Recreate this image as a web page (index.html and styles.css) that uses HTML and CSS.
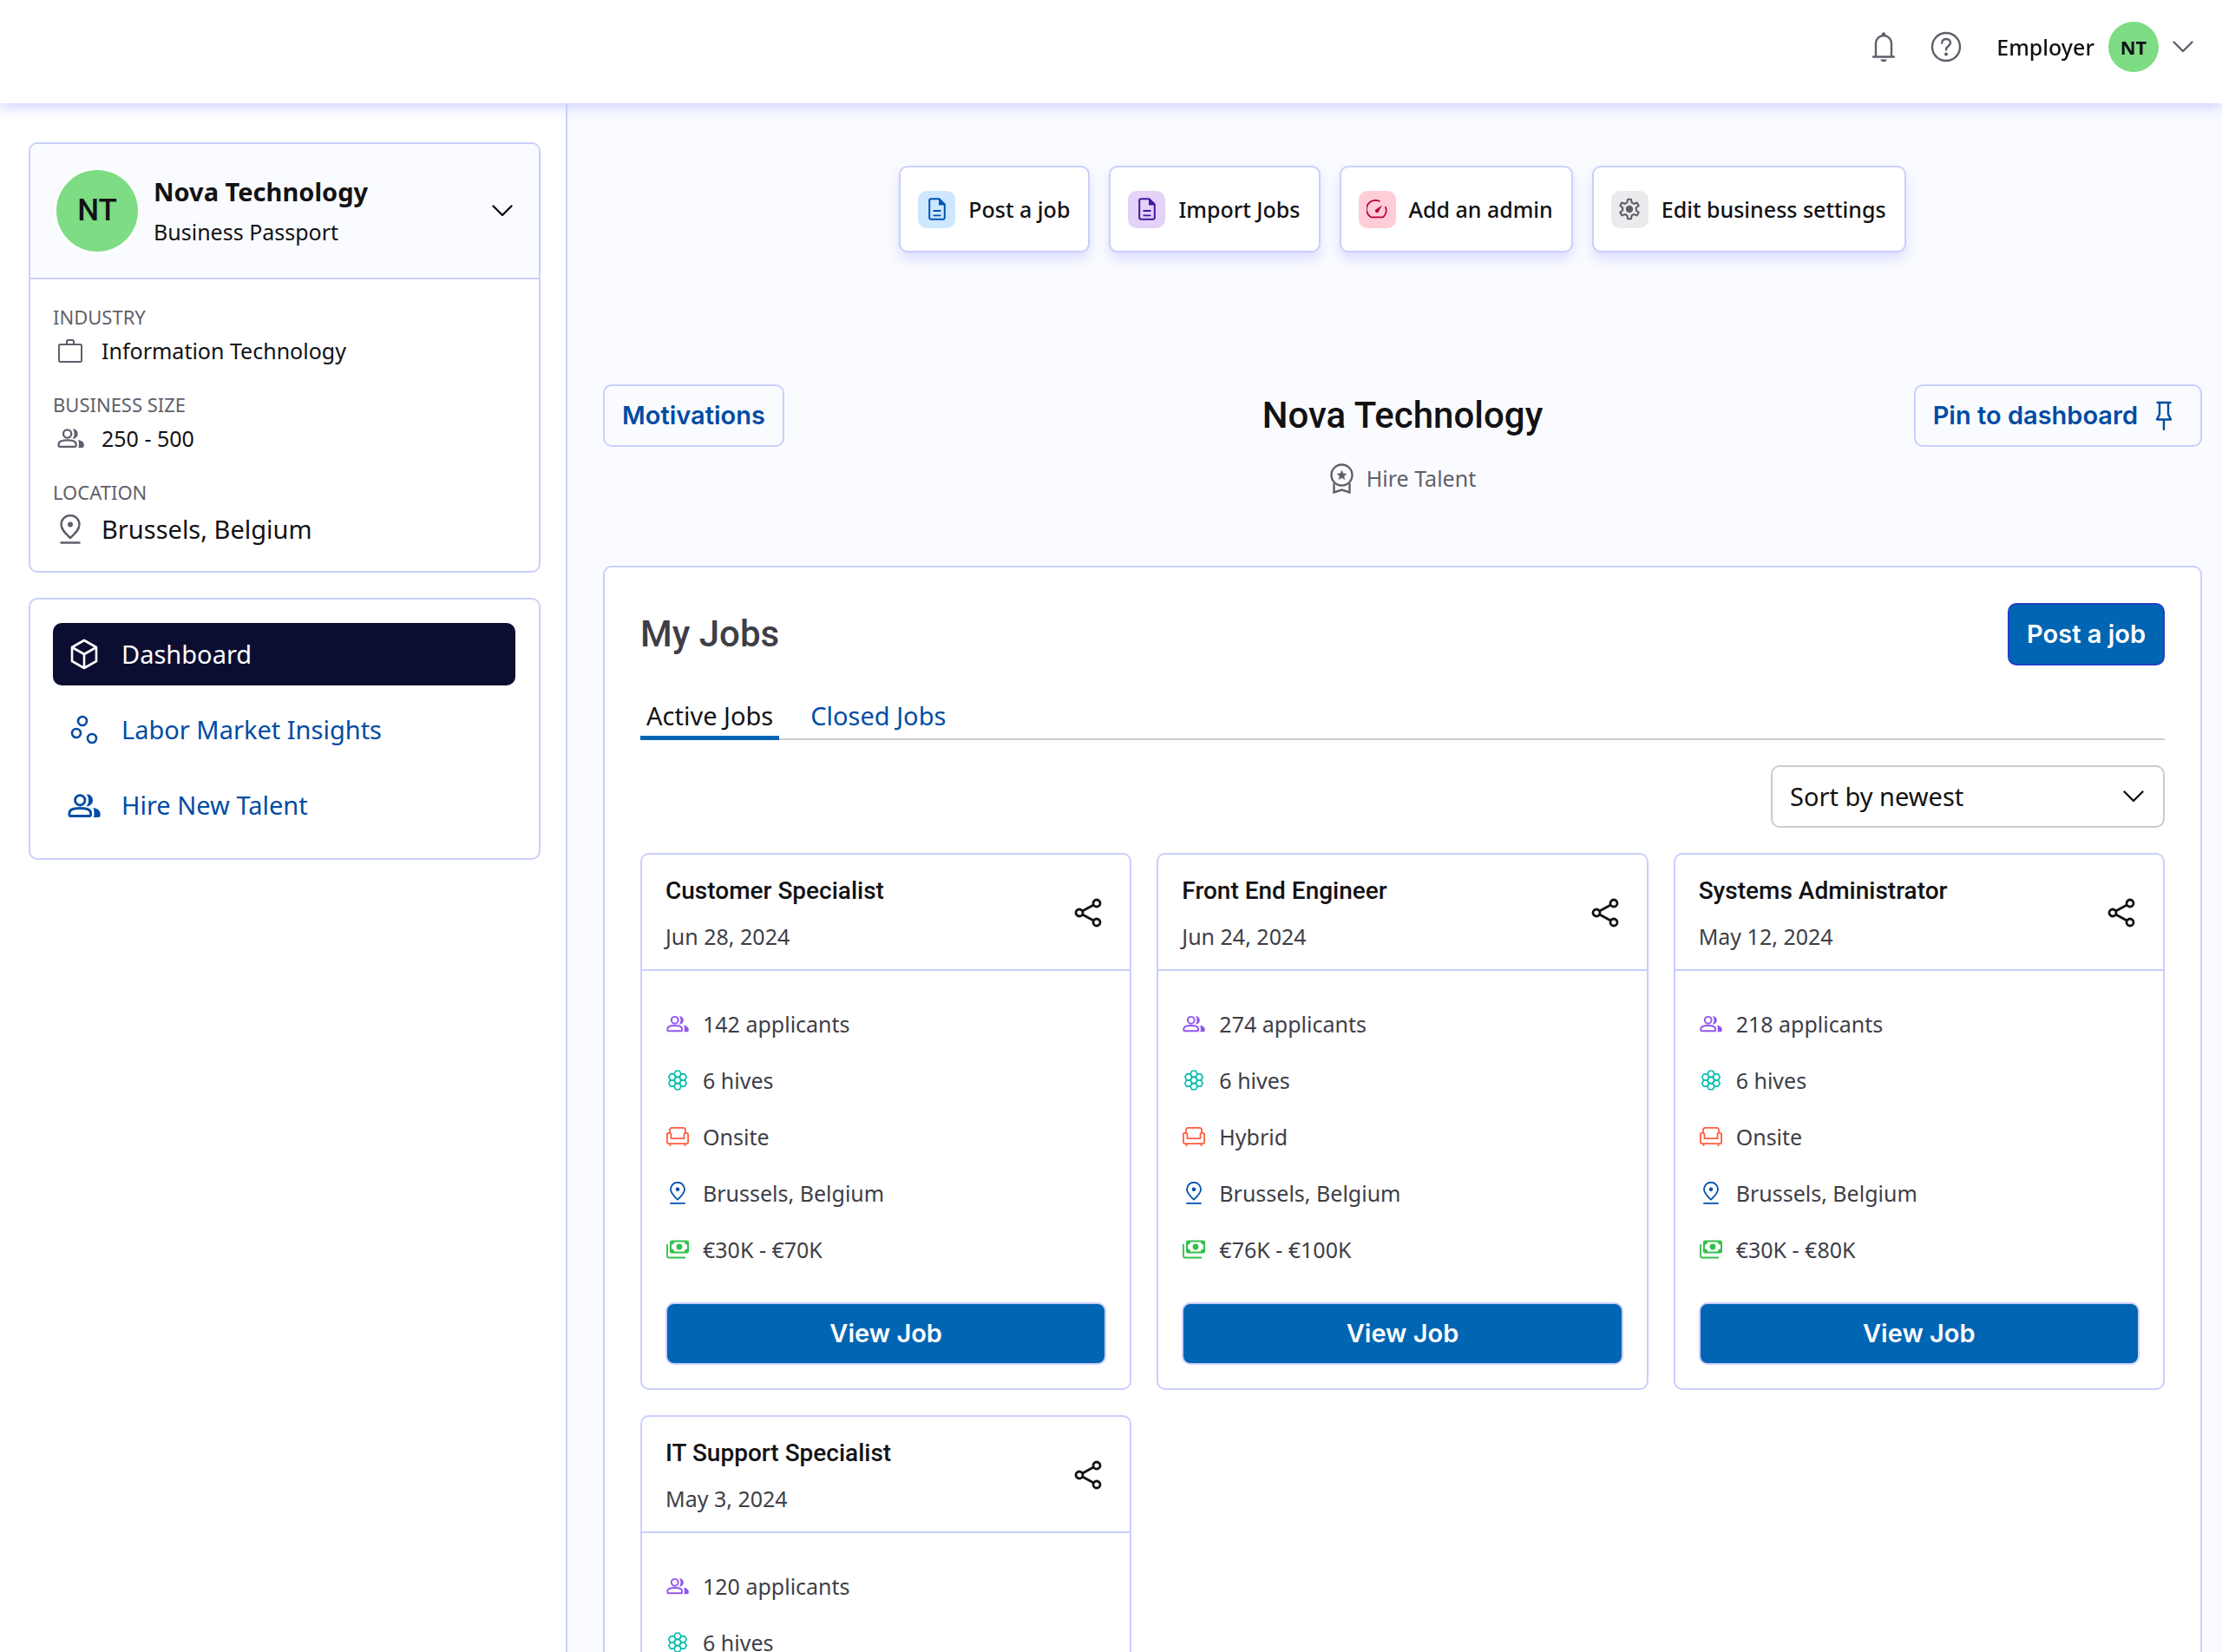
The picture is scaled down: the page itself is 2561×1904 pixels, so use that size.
FILE: index.html
```html
<!DOCTYPE html>
<html lang="en">
<head>
    <meta charset="UTF-8">
    <meta name="viewport" content="width=device-width, initial-scale=1.0">
    <title>Nova Technology - Dashboard</title>
    <link rel="stylesheet" href="styles.css">
</head>
<body>

<!-- Icon sprite -->
<svg class="sprite" aria-hidden="true">
    <symbol id="chevron" viewBox="0 0 24 14">
        <path d="M1.5 1.5L12 12 22.5 1.5" fill="none" stroke="currentColor" stroke-width="2.4" stroke-linecap="round" stroke-linejoin="round"/>
    </symbol>
    <symbol id="people" viewBox="0 0 24 17">
        <circle cx="9" cy="4.6" r="3.6" fill="none" stroke="currentColor" stroke-width="1.8"/>
        <path d="M1.2 14c0-2.6 3.6-3.6 7.8-3.6s7.8 1 7.8 3.6v1.1a1 1 0 0 1-1 1H2.2a1 1 0 0 1-1-1z" fill="none" stroke="currentColor" stroke-width="1.8"/>
        <path d="M13.6.1c2.9.1 4.7 2 4.7 4.5s-1.8 4.4-4.7 4.5c1.1-1.2 1.6-2.8 1.6-4.5S14.7 1.3 13.6.1z" fill="currentColor"/>
        <path d="M18.6 10c3.2.5 5.2 2 5.2 4.6v.9c0 .9-.6 1.5-1.5 1.5h-3.5c.4-.8.5-1.7.5-2.5 0-1.8-.2-3.2-.7-4.5z" fill="currentColor"/>
    </symbol>
    <symbol id="pin-drop" viewBox="0 0 24 34">
        <path d="M12 27C5.5 21 1.5 16.7 1.5 11.5a10.5 10.5 0 0 1 21 0C22.5 16.7 18.500 21 12 27z" fill="none" stroke="currentColor" stroke-width="2.4" stroke-linejoin="round"/>
        <circle cx="12" cy="11.5" r="3" fill="currentColor"/>
        <path d="M1.5 32.5h21" stroke="currentColor" stroke-width="2.4" stroke-linecap="round"/>
    </symbol>
    <symbol id="doc" viewBox="0 0 20 26">
        <path d="M3 1.2h9.5l6.3 6.3V23a1.8 1.8 0 0 1-1.8 1.8H3A1.8 1.8 0 0 1 1.2 23V3A1.8 1.8 0 0 1 3 1.2z" fill="none" stroke="currentColor" stroke-width="2"/>
        <path d="M12 1v7.5h7z" fill="currentColor"/>
        <path d="M5.5 15h9M5.5 20.3h9" stroke="currentColor" stroke-width="1.8"/>
    </symbol>
    <symbol id="gauge" viewBox="0 0 24 22">
        <path d="M15.5 2.3A10.3 10.3 0 0 0 3.8 19.2 2 2 0 0 0 5.5 20.3h13a2 2 0 0 0 1.7-1.1 10.3 10.3 0 0 0 1.5-11" fill="none" stroke="currentColor" stroke-width="1.8"/>
        <path d="M18 6.5L13.6 14.6a2.300 2.300 0 0 1-3.600-2.500z" fill="currentColor"/>
    </symbol>
    <symbol id="gear" viewBox="0 0 24 24">
        <path d="M10.3 1h3.400l.5 3.200 2.300 1.300 3-1.200 1.700 3-2.500 2v2.700l2.500 2-1.700 3-3-1.200-2.300 1.300-.5 3.200h-3.400l-.5-3.200-2.300-1.300-3 1.200-1.700-3 2.500-2V9.300l-2.500-2 1.700-3 3 1.200 2.300-1.300z" transform="translate(0 1.3)" fill="none" stroke="currentColor" stroke-width="1.8" stroke-linejoin="round"/>
        <circle cx="12" cy="12" r="3.6" fill="currentColor"/>
    </symbol>
    <symbol id="share" viewBox="0 0 32 34">
        <g fill="none" stroke="currentColor" stroke-width="2.8">
            <circle cx="26" cy="6" r="4"/>
            <circle cx="6" cy="17" r="4"/>
            <circle cx="26" cy="28" r="4"/>
            <path d="M9.6 15L22.4 8M9.6 19l12.8 7"/>
        </g>
    </symbol>
    <symbol id="hive" viewBox="0 0 24 24">
        <g fill="none" stroke="currentColor" stroke-width="1.5" stroke-linejoin="round">
            <path d="M8.2 12l1.9-3.3h3.8l1.9 3.3-1.9 3.3h-3.8z"/>
            <path d="M8.2 5.4l1.9-3.3h3.8l1.9 3.3-1.9 3.3h-3.8z"/>
            <path d="M8.2 18.6l1.9-3.3h3.8l1.9 3.3-1.9 3.3h-3.8z"/>
            <path d="M2.5 8.7l1.9-3.3h3.8l1.9 3.3L8.2 12H4.4z"/>
            <path d="M2.5 15.3L4.4 12h3.8l1.9 3.3-1.9 3.3H4.4z"/>
            <path d="M13.9 8.7l1.9-3.3h3.8l1.9 3.3-1.9 3.3h-3.8z"/>
            <path d="M13.9 15.3l1.9-3.3h3.8l1.9 3.3-1.9 3.3h-3.8z"/>
        </g>
    </symbol>
    <symbol id="sofa" viewBox="0 0 26 22">
        <g fill="none" stroke="currentColor" stroke-width="1.8">
            <path d="M4 6.5V3.100a2.200 2.200 0 0 1 2.200-2.200h13.600A2.200 2.200 0 0 1 22 3.100v3.400"/>
            <path d="M5.500 13.200V9a2.300 2.300 0 0 0-4.600 0v8a2.200 2.200 0 0 0 2.200 2.200h19.800a2.200 2.200 0 0 0 2.200-2.200V9a2.300 2.300 0 0 0-4.600 0v4.200z"/>
            <path d="M4.500 19v3M21.500 19v3"/>
        </g>
    </symbol>
    <symbol id="cash" viewBox="0 0 26 21">
        <path fill-rule="evenodd" d="M6.500 0h17A2.500 2.500 0 0 1 26 2.500v10a2.500 2.500 0 0 1-2.500 2.500h-17A2.500 2.500 0 0 1 4 12.500v-10A2.500 2.500 0 0 1 6.500 0zM9 2a3 3 0 0 1-3 3v5a3 3 0 0 1 3 3h12a3 3 0 0 1 3-3V5a3 3 0 0 1-3-3z" fill="currentColor"/>
        <circle cx="15" cy="7.500" r="3.400" fill="currentColor"/>
        <path d="M1 4.500V18a2 2 0 0 0 2 2h19" fill="none" stroke="currentColor" stroke-width="1.800"/>
    </symbol>
</svg>

<header class="topbar">
    <button class="icon-btn" aria-label="Notifications">
        <svg width="28" height="36" viewBox="0 0 28 36">
            <path d="M5 29V14a9 9 0 0 1 18 0v15M2 29.5h24" fill="none" stroke="currentColor" stroke-width="2.4" stroke-linecap="round"/>
            <circle cx="14" cy="3.5" r="2.2" fill="currentColor"/>
            <path d="M10.5 32.5h7a3.5 2.8 0 0 1-7 0z" fill="currentColor"/>
        </svg>
    </button>
    <button class="icon-btn" aria-label="Help">
        <svg width="36" height="36" viewBox="0 0 36 36">
            <circle cx="18" cy="18" r="16" fill="none" stroke="currentColor" stroke-width="2.4"/>
            <path d="M13.2 13.5c0-3 2.1-4.5 4.9-4.5s4.9 1.7 4.9 4.3c0 3.7-5 3.8-5 8" fill="none" stroke="currentColor" stroke-width="2.4" stroke-linecap="round"/>
            <circle cx="18" cy="26.5" r="2" fill="currentColor"/>
        </svg>
    </button>
    <button class="account-btn">
        <span>Employer</span>
        <span class="avatar avatar-small">NT</span>
        <svg class="chevron"><use href="#chevron"/></svg>
    </button>
</header>

<div class="layout">
    <!-- Sidebar -->
    <aside class="sidebar">
        <section class="box">
            <div class="profile">
                <span class="avatar avatar-large">NT</span>
                <div class="profile-text">
                    <strong>Nova Technology</strong>
                    <span>Business Passport</span>
                </div>
                <button class="toggle-btn" aria-label="Collapse profile">
                    <svg class="chevron"><use href="#chevron"/></svg>
                </button>
            </div>
            <dl class="facts">
                <div>
                    <dt>INDUSTRY</dt>
                    <dd>
                        <span class="fact-icon">
                            <svg width="30" height="29" viewBox="0 0 30 29">
                                <rect x="2" y="7" width="26" height="20" rx="1.5" fill="none" stroke="currentColor" stroke-width="2"/>
                                <path d="M11 7V3.5A1.5 1.5 0 0 1 12.5 2h5A1.5 1.5 0 0 1 19 3.5V7" fill="none" stroke="currentColor" stroke-width="2"/>
                            </svg>
                        </span>
                        Information Technology
                    </dd>
                </div>
                <div>
                    <dt>BUSINESS SIZE</dt>
                    <dd>
                        <span class="fact-icon"><svg width="31" height="22"><use href="#people"/></svg></span>
                        250 - 500
                    </dd>
                </div>
                <div>
                    <dt>LOCATION</dt>
                    <dd class="fact-large">
                        <span class="fact-icon"><svg width="24" height="34"><use href="#pin-drop"/></svg></span>
                        Brussels, Belgium
                    </dd>
                </div>
            </dl>
        </section>

        <nav class="box side-nav">
            <a href="#" class="active">
                <span class="nav-icon">
                    <svg width="32" height="36" viewBox="0 0 32 36">
                        <path d="M16 2l14 8v16l-14 8-14-8V10zM2 10l14 8 14-8M16 18v16" fill="none" stroke="currentColor" stroke-width="2.6" stroke-linejoin="round"/>
                    </svg>
                </span>
                Dashboard
            </a>
            <a href="#">
                <span class="nav-icon">
                    <svg width="32" height="34" viewBox="0 0 32 34">
                        <g fill="none" stroke="currentColor" stroke-width="2.6">
                            <circle cx="14" cy="7" r="5"/>
                            <circle cx="7" cy="21" r="5"/>
                            <circle cx="25" cy="27" r="5"/>
                        </g>
                    </svg>
                </span>
                Labor Market Insights
            </a>
            <a href="#">
                <span class="nav-icon"><svg width="38" height="27"><use href="#people"/></svg></span>
                Hire New Talent
            </a>
        </nav>
    </aside>

    <!-- Main content -->
    <main class="content">
        <div class="quick-actions">
            <button><span class="tile tile-blue"><svg width="20" height="26"><use href="#doc"/></svg></span>Post a job</button>
            <button><span class="tile tile-purple"><svg width="20" height="26"><use href="#doc"/></svg></span>Import Jobs</button>
            <button><span class="tile tile-red"><svg width="24" height="22"><use href="#gauge"/></svg></span>Add an admin</button>
            <button><span class="tile tile-gray"><svg width="28" height="28"><use href="#gear"/></svg></span>Edit business settings</button>
        </div>

        <div class="page-head">
            <button class="btn btn-outline">Motivations</button>
            <div class="page-title">
                <h1>Nova Technology</h1>
                <p>
                    <svg width="29" height="35" viewBox="0 0 29 35">
                        <circle cx="14.5" cy="13.5" r="12" fill="none" stroke="currentColor" stroke-width="2.4"/>
                        <path d="M14.5 7.5l1.7 4 4.3.4-3.3 2.8 1 4.3-3.7-2.3-3.7 2.3 1-4.3-3.3-2.8 4.3-.4z" fill="currentColor"/>
                        <path d="M5.5 23v10.5l9-3 9 3V23" fill="none" stroke="currentColor" stroke-width="2.4"/>
                    </svg>
                    Hire Talent
                </p>
            </div>
            <button class="btn btn-outline">
                Pin to dashboard
                <svg width="44" height="34" viewBox="0 0 20 34">
                    <path d="M2.5 2h15M5 2v13.5L2 21.5h16L15 15.5V2M10 21.5V33" fill="none" stroke="currentColor" stroke-width="2.4" stroke-linecap="round" stroke-linejoin="round"/>
                </svg>
            </button>
        </div>

        <section class="jobs">
            <div class="jobs-head">
                <h2>My Jobs</h2>
                <button class="btn btn-primary btn-post">Post a job</button>
            </div>

            <div class="tabs" role="tablist">
                <button role="tab" aria-selected="true" class="active">Active Jobs</button>
                <button role="tab" aria-selected="false">Closed Jobs</button>
            </div>

            <div class="sort">
                <select aria-label="Sort jobs">
                    <option>Sort by newest</option>
                    <option>Sort by oldest</option>
                </select>
                <svg class="chevron"><use href="#chevron"/></svg>
            </div>

            <div class="job-grid">
                <article class="job-card">
                    <header>
                        <div>
                            <h3>Customer Specialist</h3>
                            <time datetime="2024-06-28">Jun 28, 2024</time>
                        </div>
                        <button aria-label="Share"><svg width="32" height="34"><use href="#share"/></svg></button>
                    </header>
                    <ul>
                        <li><svg class="purple"><use href="#people"/></svg>142 applicants</li>
                        <li><svg class="teal"><use href="#hive"/></svg>6 hives</li>
                        <li><svg class="orange"><use href="#sofa"/></svg>Onsite</li>
                        <li><svg class="blue"><use href="#pin-drop"/></svg>Brussels, Belgium</li>
                        <li><svg class="green"><use href="#cash"/></svg>€30K - €70K</li>
                    </ul>
                    <button class="btn btn-primary">View Job</button>
                </article>

                <article class="job-card">
                    <header>
                        <div>
                            <h3>Front End Engineer</h3>
                            <time datetime="2024-06-24">Jun 24, 2024</time>
                        </div>
                        <button aria-label="Share"><svg width="32" height="34"><use href="#share"/></svg></button>
                    </header>
                    <ul>
                        <li><svg class="purple"><use href="#people"/></svg>274 applicants</li>
                        <li><svg class="teal"><use href="#hive"/></svg>6 hives</li>
                        <li><svg class="orange"><use href="#sofa"/></svg>Hybrid</li>
                        <li><svg class="blue"><use href="#pin-drop"/></svg>Brussels, Belgium</li>
                        <li><svg class="green"><use href="#cash"/></svg>€76K - €100K</li>
                    </ul>
                    <button class="btn btn-primary">View Job</button>
                </article>

                <article class="job-card">
                    <header>
                        <div>
                            <h3>Systems Administrator</h3>
                            <time datetime="2024-05-12">May 12, 2024</time>
                        </div>
                        <button aria-label="Share"><svg width="32" height="34"><use href="#share"/></svg></button>
                    </header>
                    <ul>
                        <li><svg class="purple"><use href="#people"/></svg>218 applicants</li>
                        <li><svg class="teal"><use href="#hive"/></svg>6 hives</li>
                        <li><svg class="orange"><use href="#sofa"/></svg>Onsite</li>
                        <li><svg class="blue"><use href="#pin-drop"/></svg>Brussels, Belgium</li>
                        <li><svg class="green"><use href="#cash"/></svg>€30K - €80K</li>
                    </ul>
                    <button class="btn btn-primary">View Job</button>
                </article>

                <article class="job-card">
                    <header>
                        <div>
                            <h3>IT Support Specialist</h3>
                            <time datetime="2024-05-03">May 3, 2024</time>
                        </div>
                        <button aria-label="Share"><svg width="32" height="34"><use href="#share"/></svg></button>
                    </header>
                    <ul>
                        <li><svg class="purple"><use href="#people"/></svg>120 applicants</li>
                        <li><svg class="teal"><use href="#hive"/></svg>6 hives</li>
                    </ul>
                </article>
            </div>
        </section>
    </main>
</div>

</body>
</html>
```

FILE: styles.css
```css
:root {
    --text: #121214;
    --text-soft: #3e3e47;
    --text-muted: #5f5f6b;
    --border: #cacffc;
    --border-gray: #cbcbd2;
    --link: #004ca3;
    --primary: #0065b3;
    --page: #fafbff;
    --navy: #0b0e31;
    --heading-font: Roboto, sans-serif;
    --button-font: Inter, sans-serif;
}

* {
    box-sizing: border-box;
}

body {
    margin: 0;
    height: 100vh;
    display: flex;
    flex-direction: column;
    overflow: hidden;
    background-color: #fff;
    color: var(--text);
    font-family: "Noto Sans", sans-serif;
    font-size: 25px;
    line-height: 36px;
}

h1, h2, h3, p, ul, dl, dd {
    margin: 0;
    padding: 0;
}

button {
    font: inherit;
    color: inherit;
    background: none;
    border: none;
    padding: 0;
    cursor: pointer;
}

svg {
    display: block;
    flex-shrink: 0;
}

.sprite {
    position: absolute;
    width: 0;
    height: 0;
}

.chevron {
    width: 24px;
    height: 14px;
}

/* Top bar */
.topbar {
    position: relative;
    z-index: 1;
    flex-shrink: 0;
    height: 119px;
    padding: 0 33px 12px;
    display: flex;
    align-items: center;
    justify-content: flex-end;
    gap: 40px;
    background-color: #fff;
    box-shadow: 0 4px 16px #cacffc;
}

.icon-btn {
    color: var(--text-muted);
}

.account-btn {
    display: flex;
    align-items: center;
    gap: 16px;
    font-weight: 500;
}

.account-btn .chevron {
    color: var(--text-muted);
}

.avatar {
    display: flex;
    align-items: center;
    justify-content: center;
    flex-shrink: 0;
    border-radius: 50%;
    background-color: #7ddc84;
}

.avatar-small {
    width: 58px;
    height: 58px;
    font-size: 22px;
    font-weight: 700;
}

.avatar-large {
    width: 94px;
    height: 94px;
    font-family: var(--heading-font);
    font-size: 35px;
    font-weight: 500;
    box-shadow: 0 0 0 3px #fff;
}

.layout {
    flex: 1;
    min-height: 0;
    display: flex;
}

/* Sidebar */
.sidebar {
    width: 654px;
    flex-shrink: 0;
    padding: 45px 29px 0 33px;
    border-right: 2px solid var(--border);
}

.box {
    margin-bottom: 29px;
    border: 2px solid var(--border);
    border-radius: 10px;
    overflow: hidden;
}

.profile {
    display: flex;
    align-items: center;
    gap: 18px;
    padding: 30px;
    background-color: var(--page);
    border-bottom: 2px solid var(--border);
}

.profile-text {
    flex: 1;
    display: flex;
    flex-direction: column;
    gap: 8px;
}

.profile-text strong {
    font-size: 29px;
    line-height: 40px;
}

.facts {
    display: flex;
    flex-direction: column;
    gap: 23px;
    padding: 26px 26px 22px;
}

.facts dt {
    font-size: 22px;
    line-height: 34px;
    color: var(--text-muted);
}

.facts dd {
    display: flex;
    align-items: center;
    gap: 16px;
    height: 44px;
}

.facts .fact-large {
    height: 52px;
    font-size: 29px;
}

.fact-icon,
.nav-icon {
    display: flex;
    justify-content: center;
    width: 40px;
    color: var(--text-muted);
}

.side-nav {
    display: flex;
    flex-direction: column;
    gap: 15px;
    padding: 27px 27px 25px 26px;
}

.side-nav a {
    display: flex;
    align-items: center;
    gap: 23px;
    height: 72px;
    padding: 0 16px;
    border-radius: 10px;
    font-size: 29px;
    color: var(--link);
    text-decoration: none;
}

.nav-icon {
    color: inherit;
}

.side-nav .active {
    background-color: var(--navy);
    color: #fff;
}

/* Main content */
.content {
    flex: 1;
    min-width: 0;
    padding: 72px 23px 40px 41px;
    overflow-y: auto;
    scrollbar-width: none;
    background-color: var(--page);
}

.quick-actions {
    display: flex;
    justify-content: center;
    gap: 22px;
}

.quick-actions button {
    display: flex;
    align-items: center;
    gap: 15px;
    height: 100px;
    padding: 0 21px 0 20px;
    background-color: #fff;
    border: 2px solid var(--border);
    border-radius: 10px;
    box-shadow: 0 8px 14px #dcdffd;
    font-weight: 500;
}

.tile {
    display: flex;
    align-items: center;
    justify-content: center;
    width: 43px;
    height: 43px;
    border-radius: 10px;
}

.tile-blue {
    background-color: #cde7ff;
    color: #0052b8;
}

.tile-purple {
    background-color: #e4d2f8;
    color: #42189f;
}

.tile-red {
    background-color: #fecdd6;
    color: #ba0047;
}

.tile-gray {
    background-color: #ebebed;
    color: var(--text-muted);
}

.page-head {
    display: grid;
    grid-template-columns: 1fr auto 1fr;
    align-items: start;
    margin-top: 152px;
}

.page-head .btn:first-child {
    justify-self: start;
}

.page-head .btn:last-child {
    justify-self: end;
}

.page-title h1 {
    font-family: var(--heading-font);
    font-size: 42px;
    font-weight: 500;
    line-height: 72px;
}

.page-title p {
    display: flex;
    align-items: center;
    justify-content: center;
    gap: 14px;
    margin-top: 18px;
    color: var(--text-muted);
}

.btn {
    display: flex;
    align-items: center;
    justify-content: center;
    gap: 8px;
    height: 72px;
    padding: 0 20px;
    border: 2px solid var(--border);
    border-radius: 10px;
    font-family: var(--button-font);
    font-size: 29px;
    font-weight: 600;
}

.btn-outline {
    color: var(--link);
}

.btn-primary {
    background-color: var(--primary);
    color: #fff;
}

.btn-post {
    border-color: #2340c4;
}

/* Jobs panel */
.jobs {
    margin-top: 83px;
    padding: 41px;
    background-color: #fff;
    border: 2px solid var(--border);
    border-radius: 10px;
}

.jobs-head {
    display: flex;
    align-items: center;
    justify-content: space-between;
}

.jobs-head h2 {
    font-family: var(--heading-font);
    font-size: 42px;
    font-weight: 500;
    color: var(--text-soft);
}

.tabs {
    display: flex;
    gap: 29px;
    margin-top: 29px;
    box-shadow: inset 0 -2px var(--border-gray);
}

.tabs button {
    height: 57px;
    padding: 5px 7px 0;
    border-bottom: 5px solid transparent;
    font-size: 29px;
    color: var(--link);
}

.tabs .active {
    border-color: var(--primary);
    color: var(--text);
}

.sort {
    position: relative;
    width: 454px;
    margin: 29px 0 29px auto;
}

.sort select {
    width: 100%;
    height: 72px;
    padding: 0 20px;
    appearance: none;
    background-color: #fff;
    border: 2px solid var(--border-gray);
    border-radius: 10px;
    font: inherit;
    font-size: 29px;
    color: var(--text);
}

.sort .chevron {
    position: absolute;
    top: 29px;
    right: 24px;
    pointer-events: none;
}

.job-grid {
    display: grid;
    grid-template-columns: repeat(3, 1fr);
    align-items: start;
    gap: 29px;
}

.job-card {
    border: 2px solid var(--border);
    border-radius: 10px;
}

.job-card:last-child {
    min-height: 619px;
}

.job-card header {
    display: flex;
    align-items: center;
    justify-content: space-between;
    padding: 22px 32px 20px 27px;
    border-bottom: 2px solid var(--border);
}

.job-card h3 {
    margin-bottom: 14px;
    font-family: var(--heading-font);
    font-size: 28px;
    font-weight: 500;
    line-height: 40px;
}

.job-card time {
    display: block;
    color: var(--text-soft);
}

.job-card ul {
    display: flex;
    flex-direction: column;
    gap: 29px;
    padding: 43px 28px;
    list-style: none;
    color: var(--text-soft);
}

.job-card li {
    display: flex;
    align-items: center;
    gap: 16px;
}

.job-card li svg {
    width: 26px;
    height: 26px;
}

.job-card .btn {
    width: calc(100% - 54px);
    margin: 0 27px 27px;
}

.purple {
    color: #9256f0;
}

.teal {
    color: #00bdb0;
}

.orange {
    color: #ff5c3f;
}

.blue {
    color: #0050b0;
}

.green {
    color: #32c04a;
}
```
